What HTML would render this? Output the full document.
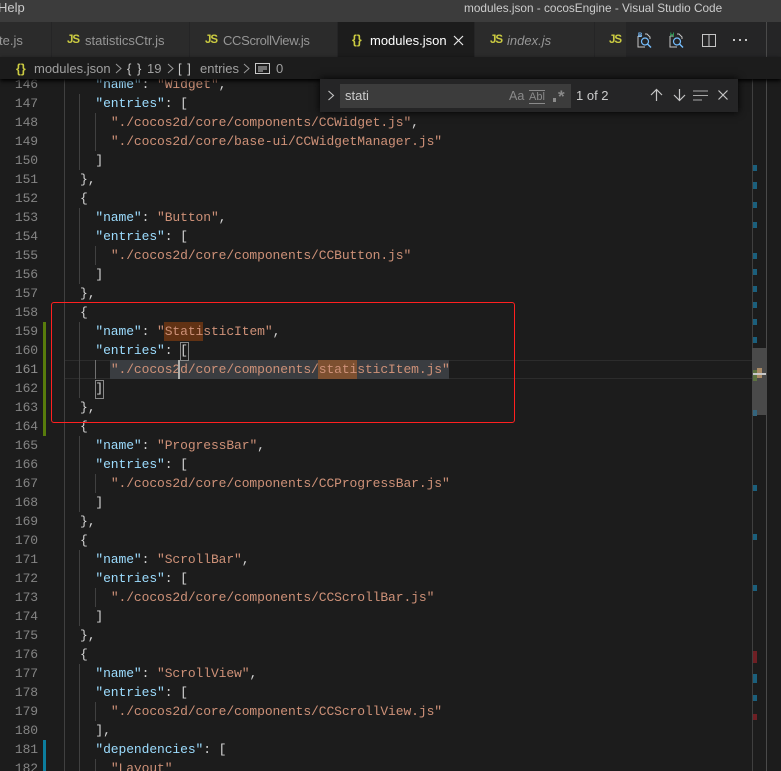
<!DOCTYPE html>
<html><head><meta charset="utf-8">
<style>
html,body{margin:0;padding:0;background:#1c1c1c}
#r{position:relative;width:781px;height:771px;overflow:hidden;background:#1c1c1c;font-family:"Liberation Sans",sans-serif}
#r div,#r svg,#r span.a{position:absolute}
.tb{left:0;top:0;width:781px;height:22px;background:#3c3c3c;color:#cccccc;font-size:12.5px;line-height:16px}
.tabs{left:0;top:22px;width:781px;height:35px;background:#252526}
.tab{top:0;height:35px;background:#2b2b2b;color:#969696;font-size:13px;line-height:35px;white-space:pre}
.js{color:#cbcb41;font-weight:bold;font-size:11.5px;letter-spacing:-1px;font-family:"Liberation Sans",sans-serif}
.bc{left:0;top:57px;width:781px;height:22px;background:#1c1c1c;color:#a0a0a0;font-size:13px;line-height:24px;box-shadow:0 2px 4px #000;z-index:5;white-space:pre}
.br{color:#cbcb41;font-weight:bold}
.ln{left:0;width:38px;text-align:right;height:19px;line-height:19px;color:#858585;font:13px/19px "Liberation Mono",monospace;letter-spacing:-.1px}
.c{left:49.2px;height:19px;font:13px/19px "Liberation Mono",monospace;letter-spacing:-.1px;color:#d4d4d4;white-space:pre}
.k{color:#9cdcfe}.s{color:#ce9178}
.g{width:1px;background:#404040}
.m{left:753px;width:4px;background:#1b5f7c}
.fw{left:320px;top:79px;width:418px;height:33px;background:#252526;box-shadow:0 0 8px #000;z-index:6}
</style></head><body><div id="r">

<div style="top:360px;height:19px;box-sizing:border-box;border-top:1px solid #2c2c2c;border-bottom:1px solid #2c2c2c;left:65px;width:687px"></div>
<div style="left:110px;top:360px;width:339px;height:19px;background:#3a3d41"></div>
<div style="left:164px;top:322px;width:39px;height:19px;background:#613214"></div>
<div style="left:318px;top:360px;width:39px;height:19px;background:#7d5030"></div>

<div class="g" style="left:64px;top:79px;height:692px"></div>
<div class="g" style="left:79px;top:94px;height:76px"></div>
<div class="g" style="left:79px;top:208px;height:76px"></div>
<div class="g" style="left:79px;top:322px;height:76px"></div>
<div class="g" style="left:79px;top:436px;height:76px"></div>
<div class="g" style="left:79px;top:550px;height:76px"></div>
<div class="g" style="left:79px;top:664px;height:107px"></div>
<div class="g" style="left:95px;top:113px;height:38px"></div>
<div class="g" style="left:95px;top:246px;height:19px"></div>
<div class="g" style="left:95px;top:360px;height:19px;background:#707070"></div>
<div class="g" style="left:95px;top:474px;height:19px"></div>
<div class="g" style="left:95px;top:588px;height:19px"></div>
<div class="g" style="left:95px;top:702px;height:19px"></div>
<div class="g" style="left:95px;top:759px;height:12px"></div>

<div style="left:43px;top:322px;width:3px;height:114px;background:#587c0c"></div>
<div style="left:43px;top:740px;width:3px;height:31px;background:#0c7d9d"></div>

<div class="ln" style="top:75px">146</div><div class="c" style="top:75px">      <span class="k">"name"</span>: <span class="s">"Widget"</span>,</div>
<div class="ln" style="top:94px">147</div><div class="c" style="top:94px">      <span class="k">"entries"</span>: [</div>
<div class="ln" style="top:113px">148</div><div class="c" style="top:113px">        <span class="s">"./cocos2d/core/components/CCWidget.js"</span>,</div>
<div class="ln" style="top:132px">149</div><div class="c" style="top:132px">        <span class="s">"./cocos2d/core/base-ui/CCWidgetManager.js"</span></div>
<div class="ln" style="top:151px">150</div><div class="c" style="top:151px">      ]</div>
<div class="ln" style="top:170px">151</div><div class="c" style="top:170px">    },</div>
<div class="ln" style="top:189px">152</div><div class="c" style="top:189px">    {</div>
<div class="ln" style="top:208px">153</div><div class="c" style="top:208px">      <span class="k">"name"</span>: <span class="s">"Button"</span>,</div>
<div class="ln" style="top:227px">154</div><div class="c" style="top:227px">      <span class="k">"entries"</span>: [</div>
<div class="ln" style="top:246px">155</div><div class="c" style="top:246px">        <span class="s">"./cocos2d/core/components/CCButton.js"</span></div>
<div class="ln" style="top:265px">156</div><div class="c" style="top:265px">      ]</div>
<div class="ln" style="top:284px">157</div><div class="c" style="top:284px">    },</div>
<div class="ln" style="top:303px">158</div><div class="c" style="top:303px">    {</div>
<div class="ln" style="top:322px">159</div><div class="c" style="top:322px">      <span class="k">"name"</span>: <span class="s">"StatisticItem"</span>,</div>
<div class="ln" style="top:341px">160</div><div class="c" style="top:341px">      <span class="k">"entries"</span>: [</div>
<div class="ln" style="top:360px;color:#8f8f8f">161</div><div class="c" style="top:360px">        <span class="s">"./cocos2d/core/components/statisticItem.js"</span></div>
<div class="ln" style="top:379px">162</div><div class="c" style="top:379px">      ]</div>
<div class="ln" style="top:398px">163</div><div class="c" style="top:398px">    },</div>
<div class="ln" style="top:417px">164</div><div class="c" style="top:417px">    {</div>
<div class="ln" style="top:436px">165</div><div class="c" style="top:436px">      <span class="k">"name"</span>: <span class="s">"ProgressBar"</span>,</div>
<div class="ln" style="top:455px">166</div><div class="c" style="top:455px">      <span class="k">"entries"</span>: [</div>
<div class="ln" style="top:474px">167</div><div class="c" style="top:474px">        <span class="s">"./cocos2d/core/components/CCProgressBar.js"</span></div>
<div class="ln" style="top:493px">168</div><div class="c" style="top:493px">      ]</div>
<div class="ln" style="top:512px">169</div><div class="c" style="top:512px">    },</div>
<div class="ln" style="top:531px">170</div><div class="c" style="top:531px">    {</div>
<div class="ln" style="top:550px">171</div><div class="c" style="top:550px">      <span class="k">"name"</span>: <span class="s">"ScrollBar"</span>,</div>
<div class="ln" style="top:569px">172</div><div class="c" style="top:569px">      <span class="k">"entries"</span>: [</div>
<div class="ln" style="top:588px">173</div><div class="c" style="top:588px">        <span class="s">"./cocos2d/core/components/CCScrollBar.js"</span></div>
<div class="ln" style="top:607px">174</div><div class="c" style="top:607px">      ]</div>
<div class="ln" style="top:626px">175</div><div class="c" style="top:626px">    },</div>
<div class="ln" style="top:645px">176</div><div class="c" style="top:645px">    {</div>
<div class="ln" style="top:664px">177</div><div class="c" style="top:664px">      <span class="k">"name"</span>: <span class="s">"ScrollView"</span>,</div>
<div class="ln" style="top:683px">178</div><div class="c" style="top:683px">      <span class="k">"entries"</span>: [</div>
<div class="ln" style="top:702px">179</div><div class="c" style="top:702px">        <span class="s">"./cocos2d/core/components/CCScrollView.js"</span></div>
<div class="ln" style="top:721px">180</div><div class="c" style="top:721px">      ],</div>
<div class="ln" style="top:740px">181</div><div class="c" style="top:740px">      <span class="k">"dependencies"</span>: [</div>
<div class="ln" style="top:759px">182</div><div class="c" style="top:759px">        <span class="s">"Layout"</span></div>

<div style="left:180px;top:342px;width:7px;height:17px;border:1px solid #888"></div>
<div style="left:95px;top:380px;width:7px;height:17px;border:1px solid #888"></div>
<div style="left:178px;top:360px;width:2px;height:19px;background:#aeafad"></div>

<div style="left:51px;top:302px;width:462px;height:119px;border:1.5px solid #ff2020;border-radius:3px;z-index:4"></div>

<div style="left:752px;top:79px;width:1px;height:692px;background:#3f3f3f"></div>
<div style="left:766px;top:22px;width:1px;height:749px;background:#4a4a4a;z-index:3"></div>
<div style="left:752px;top:348px;width:15px;height:67px;background:#4a4a4a"></div>
<div class="m" style="top:165px;height:6px"></div>
<div class="m" style="top:182px;height:7px"></div>
<div class="m" style="top:202px;height:6px"></div>
<div class="m" style="top:222px;height:6px"></div>
<div class="m" style="top:253px;height:6px"></div>
<div class="m" style="top:269px;height:6px"></div>
<div class="m" style="top:286px;height:6px"></div>
<div class="m" style="top:302px;height:6px"></div>
<div class="m" style="top:319px;height:6px"></div>
<div class="m" style="top:337px;height:6px"></div>
<div class="m" style="top:410px;height:6px;background:#34647c"></div>
<div class="m" style="top:370px;height:11px;background:#5d7340"></div>
<div style="left:757px;top:368px;width:5px;height:10px;background:#a98a66"></div>
<div style="left:753px;top:373px;width:13px;height:2px;background:#c8c8c8"></div>
<div class="m" style="top:485px;height:6px"></div>
<div class="m" style="top:534px;height:6px"></div>
<div class="m" style="top:585px;height:6px"></div>
<div class="m" style="top:651px;height:12px;background:#6e1f24"></div>
<div class="m" style="top:674px;height:9px"></div>
<div class="m" style="top:695px;height:6px"></div>
<div class="m" style="top:714px;height:6px;background:#6e1f24"></div>

<div class="tb">
  <div style="left:-2px;top:0;font-size:13px">Help</div>
  <div style="left:464px;top:0;white-space:pre;font-size:11.8px">modules.json - cocosEngine - Visual Studio Code</div>
</div>

<div class="tabs">
  <div class="tab" style="left:0;width:51px"><div style="left:-1px;top:1px">te.js</div></div>
  <div class="tab" style="left:52px;width:137px"><div class="js" style="left:15px;top:1px">JS</div><div style="left:33px;top:1px">statisticsCtr.js</div></div>
  <div class="tab" style="left:190px;width:147px"><div class="js" style="left:15px;top:1px">JS</div><div style="left:33px;top:1px;letter-spacing:-.33px">CCScrollView.js</div></div>
  <div class="tab" style="left:338px;width:136px;background:#1c1c1c;color:#fff"><div class="br" style="left:14px;top:1px;font-size:12.5px">{}</div><div style="left:32px;top:1px">modules.json</div>
    <svg style="left:115px;top:13px" width="11" height="11" viewBox="0 0 11 11"><path d="M1 1l9 9M10 1l-9 9" stroke="#e8e8e8" stroke-width="1.2" fill="none"/></svg></div>
  <div class="tab" style="left:475px;width:119px"><div class="js" style="left:15px;top:1px">JS</div><div style="left:32px;top:1px;font-style:italic">index.js</div></div>
  <div class="tab" style="left:595px;width:31px"><div class="js" style="left:14px;top:1px">JS</div></div>

  <svg style="left:637px;top:10px" width="16" height="17" viewBox="0 0 16 17" fill="none"><path d="M1 4h3M8 2h2l3 3v2M1 4v11h7" stroke="#c5c5c5"/><circle cx="8" cy="9.5" r="3.5" stroke="#75beff" stroke-width="1.2"/><path d="M10.5 12l3.5 3.5" stroke="#75beff" stroke-width="1.4"/><text x="1" y="5" font-size="6" fill="#75beff" font-family="Liberation Sans" font-weight="bold">B</text></svg>
  <svg style="left:669px;top:10px" width="16" height="17" viewBox="0 0 16 17" fill="none"><path d="M1 4h3M8 2h2l3 3v2M1 4v11h7" stroke="#c5c5c5"/><circle cx="8" cy="9.5" r="3.5" stroke="#75beff" stroke-width="1.2"/><path d="M10.5 12l3.5 3.5" stroke="#75beff" stroke-width="1.4"/><text x="1" y="5" font-size="6" fill="#2fa35a" font-family="Liberation Sans" font-weight="bold">H</text></svg>
  <svg style="left:702px;top:12px" width="14" height="13" viewBox="0 0 14 13" fill="none"><path d="M.5.5h13v12H.5zM7 .5v12" stroke="#c5c5c5"/></svg>
  <svg style="left:733px;top:16px" width="14" height="4" viewBox="0 0 14 4" fill="#c5c5c5"><rect x="0" y="1" width="2" height="2"/><rect x="6" y="1" width="2" height="2"/><rect x="12" y="1" width="2" height="2"/></svg>
</div>

<div class="bc">
  <div class="br" style="left:16px;top:0;font-size:12.5px">{}</div>
  <div style="left:34px;top:0">modules.json</div>
  <svg style="left:115px;top:6px" width="7" height="11" viewBox="0 0 7 11" fill="none"><path d="M1 1l5 4.5L1 10" stroke="#999"/></svg>
  <div style="left:127px;top:0;color:#c8c8c8;font-size:13px;letter-spacing:1px">{ }</div>
  <div style="left:147px;top:0">19</div>
  <svg style="left:167px;top:6px" width="7" height="11" viewBox="0 0 7 11" fill="none"><path d="M1 1l5 4.5L1 10" stroke="#999"/></svg>
  <div style="left:178px;top:0;color:#c8c8c8;font-size:13px;letter-spacing:1px">[ ]</div>
  <div style="left:200px;top:0">entries</div>
  <svg style="left:243px;top:6px" width="7" height="11" viewBox="0 0 7 11" fill="none"><path d="M1 1l5 4.5L1 10" stroke="#999"/></svg>
  <svg style="left:255px;top:6px" width="15" height="12" viewBox="0 0 15 12" fill="none"><rect x=".5" y=".5" width="14" height="10" stroke="#c8c8c8"/><path d="M3 4h9M3 6h9M3 8h5" stroke="#c8c8c8"/></svg>
  <div style="left:276px;top:0">0</div>
</div>

<div class="fw">
  <svg style="left:7px;top:11px" width="8" height="11" viewBox="0 0 8 11" fill="none"><path d="M1.5 1l5 4.5-5 4.5" stroke="#c5c5c5" stroke-width="1.1"/></svg>
  <div style="left:20px;top:5px;width:231px;height:24px;background:#3c3c3c;color:#cccccc;font-size:13px;line-height:24px"><div style="left:5px;top:0">stati</div>
    <div style="left:169px;top:0;color:#8a8a8a;font-size:12.5px">Aa</div>
    <div style="left:189px;top:6px;height:12px;line-height:12px;color:#8a8a8a;font-size:11px;border-top:1px solid #8a8a8a;border-bottom:1px solid #8a8a8a">Abl</div>
    <div style="left:213px;top:14px;width:3px;height:4px;background:#8a8a8a"></div>
    <div style="left:218px;top:1px;color:#8a8a8a;font-size:17px;font-weight:bold">*</div>
  </div>
  <div style="left:256px;top:9px;color:#cccccc;font-size:13px;line-height:16px;white-space:pre">1 of 2</div>
  <svg style="left:330px;top:9px" width="13" height="14" viewBox="0 0 13 14" fill="none"><path d="M6.5 13V1.5M1 7l5.5-5.5L12 7" stroke="#c5c5c5" stroke-width="1.2"/></svg>
  <svg style="left:353px;top:9px" width="13" height="14" viewBox="0 0 13 14" fill="none"><path d="M6.5 1v11.5M1 7l5.5 5.5L12 7" stroke="#c5c5c5" stroke-width="1.2"/></svg>
  <svg style="left:373px;top:11px" width="16" height="11" viewBox="0 0 16 11" fill="none"><path d="M0 1h15M0 5.5h15M0 10h9" stroke="#a8a8a8"/></svg>
  <svg style="left:398px;top:11px" width="10" height="10" viewBox="0 0 10 10" fill="none"><path d="M.5.5l9 9M9.5.5l-9 9" stroke="#c5c5c5" stroke-width="1.2"/></svg>
</div>

</div></body></html>
